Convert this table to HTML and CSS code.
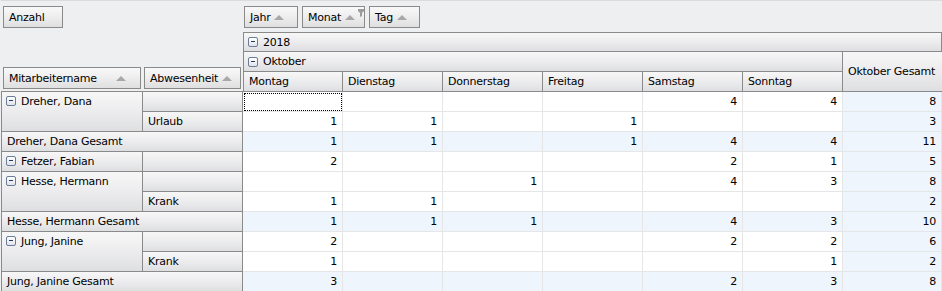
FILE: index.html
```html
<!DOCTYPE html>
<html lang="de">
<head>
  <meta charset="UTF-8" />
  <title>Abwesenheiten Pivot</title>
  <link rel="stylesheet" href="styles.css">
</head>
<body>

  <div class="pivot">

    <!-- Datenfelder -->
    <div class="data-fields">
      <span class="field-btn w-anzahl">Anzahl</span>
    </div>

    <!-- Spaltenfelder -->
    <div class="col-fields">
      <span class="field-btn w-jahr">Jahr <i class="sort"></i></span>
      <span class="field-btn w-monat">Monat <i class="sort"></i>
        <svg class="filter" width="6" height="8" viewBox="0 0 6 8"><path d="M0 0h6v2l-2 2v3l-2 1v-4l-2-2z" fill="#9c9c9c"/></svg>
      </span>
      <span class="field-btn w-tag">Tag <i class="sort"></i></span>
    </div>

    <!-- Zeilenfelder -->
    <div class="row-fields">
      <span class="field-btn wide">Mitarbeitername <i class="sort"></i></span>
      <span class="field-btn mid">Abwesenheit <i class="sort"></i></span>
    </div>

    <div class="col-head year"><i class="toggle"></i>2018</div>
    <div class="col-head month"><i class="toggle"></i>Oktober</div>
    <div class="col-head month-total">Oktober Gesamt</div>

    <div class="col-head day first">Montag</div>
    <div class="col-head day">Dienstag</div>
    <div class="col-head day">Donnerstag</div>
    <div class="col-head day">Freitag</div>
    <div class="col-head day">Samstag</div>
    <div class="col-head day">Sonntag</div>

    <!-- Dreher -->
    <div class="row-head name span2"><i class="toggle"></i>Dreher, Dana</div>
    <div class="row-head sub"></div>
    <div class="cell focus"></div><div class="cell"></div><div class="cell"></div><div class="cell"></div><div class="cell">4</div><div class="cell">4</div><div class="cell total">8</div>

    <div class="row-head sub">Urlaub</div>
    <div class="cell">1</div><div class="cell">1</div><div class="cell"></div><div class="cell">1</div><div class="cell"></div><div class="cell"></div><div class="cell total">3</div>

    <div class="row-head grand">Dreher, Dana Gesamt</div>
    <div class="cell total">1</div><div class="cell total">1</div><div class="cell total"></div><div class="cell total">1</div><div class="cell total">4</div><div class="cell total">4</div><div class="cell total">11</div>

    <!-- Fetzer -->
    <div class="row-head name"><i class="toggle"></i>Fetzer, Fabian</div>
    <div class="row-head sub"></div>
    <div class="cell">2</div><div class="cell"></div><div class="cell"></div><div class="cell"></div><div class="cell">2</div><div class="cell">1</div><div class="cell total">5</div>

    <!-- Hesse -->
    <div class="row-head name span2"><i class="toggle"></i>Hesse, Hermann</div>
    <div class="row-head sub"></div>
    <div class="cell"></div><div class="cell"></div><div class="cell">1</div><div class="cell"></div><div class="cell">4</div><div class="cell">3</div><div class="cell total">8</div>

    <div class="row-head sub">Krank</div>
    <div class="cell">1</div><div class="cell">1</div><div class="cell"></div><div class="cell"></div><div class="cell"></div><div class="cell"></div><div class="cell total">2</div>

    <div class="row-head grand">Hesse, Hermann Gesamt</div>
    <div class="cell total">1</div><div class="cell total">1</div><div class="cell total">1</div><div class="cell total"></div><div class="cell total">4</div><div class="cell total">3</div><div class="cell total">10</div>

    <!-- Jung -->
    <div class="row-head name span2"><i class="toggle"></i>Jung, Janine</div>
    <div class="row-head sub"></div>
    <div class="cell">2</div><div class="cell"></div><div class="cell"></div><div class="cell"></div><div class="cell">2</div><div class="cell">2</div><div class="cell total">6</div>

    <div class="row-head sub">Krank</div>
    <div class="cell">1</div><div class="cell"></div><div class="cell"></div><div class="cell"></div><div class="cell"></div><div class="cell">1</div><div class="cell total">2</div>

    <div class="row-head grand">Jung, Janine Gesamt</div>
    <div class="cell total">3</div><div class="cell total"></div><div class="cell total"></div><div class="cell total"></div><div class="cell total">2</div><div class="cell total">3</div><div class="cell total">8</div>

  </div>

</body>
</html>
```

FILE: styles.css
```css
body, html {
  margin: 0;
  padding: 0;
  overflow: hidden;
  background-color: #eeeff1;
  font-family: "DejaVu Sans", sans-serif;
  font-size: 11px;
  letter-spacing: -0.25px;
  color: #000;
}

.pivot {
  display: grid;
  grid-template-columns: 142px 100px repeat(6, 100px) 99px;
  grid-template-rows: 30px 20px 20px 20px repeat(10, 20px);
  margin-left: 1px;
  padding-top: 1px;
  border-top: 1px solid #dadbdd;
}

/* Feld-Buttons */
.field-btn {
  display: inline-flex;
  align-items: center;
  box-sizing: border-box;
  height: 22px;
  padding: 0 4px 0 5px;
  border: 1px solid #8a8a8a;
  background: linear-gradient(#f9f9f9, #ececec 55%, #dfdfdf);
  white-space: nowrap;
}

.w-anzahl { width: 60px; }
.w-jahr   { width: 54px; }
.w-monat  { width: 63px; }
.w-tag    { width: 51px; }

.field-btn.wide {
  width: 138px;
  justify-content: space-between;
  padding-right: 14px;
}

.field-btn.mid {
  width: 97px;
}

.sort {
  display: inline-block;
  flex: none;
  width: 0;
  height: 0;
  margin-left: 4px;
  border-left: 5px solid transparent;
  border-right: 5px solid transparent;
  border-bottom: 5px solid #a8a8a8;
}

.filter {
  flex: none;
  margin-left: 3px;
  align-self: flex-start;
  margin-top: 2px;
}

.data-fields {
  grid-column: span 2;
  padding: 4px 0 0 2px;
}

.col-fields {
  grid-column: span 7;
  display: flex;
  gap: 4px;
  padding: 4px 0 0 1px;
}

.row-fields {
  grid-column: span 2;
  grid-row: span 3;
  display: flex;
  align-items: flex-end;
  gap: 3px;
  padding: 0 0 2px 2px;
  border-bottom: 1px solid #8a8a8a;
}

/* Kopfzellen */
.col-head,
.row-head {
  box-sizing: border-box;
  display: flex;
  align-items: center;
  padding: 0 5px;
  border-right: 1px solid #8a8a8a;
  border-bottom: 1px solid #8a8a8a;
  background: linear-gradient(#f7f7f8, #ebebed 55%, #dedfe1);
  white-space: nowrap;
}

.year {
  grid-column: span 7;
  border-top: 1px solid #8a8a8a;
  border-left: 1px solid #8a8a8a;
}

.month {
  grid-column: span 6;
  border-left: 1px solid #8a8a8a;
}

.month-total {
  grid-row: span 2;
  border-right: none;
}

.day.first {
  border-left: 1px solid #8a8a8a;
}

.row-head {
  align-items: flex-start;
  line-height: 19px;
}

.row-head.name,
.row-head.grand {
  border-left: 1px solid #8a8a8a;
}

.row-head.span2 {
  grid-row: span 2;
}

.row-head.grand {
  grid-column: span 2;
}

.toggle {
  display: inline-block;
  box-sizing: border-box;
  width: 10px;
  height: 10px;
  margin: 0 5px 0 -1px;
  border: 1px solid #6b7d99;
  border-radius: 2px;
  background: linear-gradient(#ffffff, #dfe3ea);
  position: relative;
  flex: none;
}

.toggle::after {
  content: "";
  position: absolute;
  left: 2px;
  top: 3px;
  width: 4px;
  height: 1px;
  background: #2a3a5a;
}

.row-head .toggle {
  margin-top: 4px;
}

/* Datenzellen */
.cell {
  box-sizing: border-box;
  padding: 0 5px;
  line-height: 19px;
  text-align: right;
  background-color: #fff;
  border-right: 1px solid #e5e6e8;
  border-bottom: 1px solid #e5e6e8;
}

.cell.total {
  background-color: #eef5fd;
}

.cell.focus {
  outline: 1px dotted #000;
  outline-offset: -2px;
}
```
